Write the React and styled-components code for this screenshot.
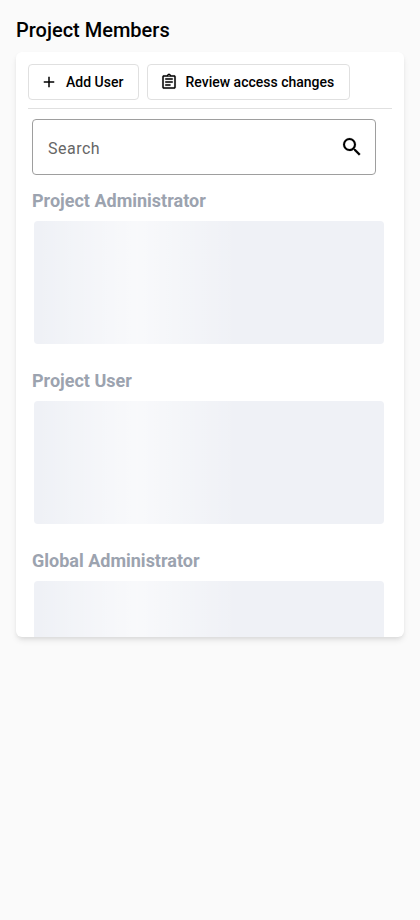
import React from "react";
import styled, { createGlobalStyle } from "styled-components";

const GlobalStyle = createGlobalStyle`
  *, *::before, *::after { box-sizing: border-box; }
  body { margin: 0; background: #fafafa; font-family: Roboto, sans-serif; color: #000; -webkit-font-smoothing: antialiased; }
`;

const Page = styled.main`
  min-height: 920px;
  padding: 14px 16px;
`;

const Title = styled.h1`
  margin: 0 0 6px;
  font-size: 20px;
  line-height: 32px;
  font-weight: 500;
`;

const Card = styled.section`
  display: flex;
  flex-direction: column;
  height: 585px;
  overflow: hidden;
  background: #fff;
  border-radius: 6px;
  box-shadow: 0 4px 6px -1px rgba(0,0,0,.1), 0 2px 4px -1px rgba(0,0,0,.06);
`;

const Toolbar = styled.div`
  display: flex;
  flex: none;
  gap: 8px;
  height: 57px;
  margin: 0 12px;
  padding-top: 12px;
  border-bottom: 1px solid #e0e0e0;
`;

const ToolButton = styled.button`
  display: flex;
  align-items: center;
  gap: 8px;
  width: ${({ $width }) => $width}px;
  height: 36px;
  padding: 0 0 0 ${({ $inset = 11 }) => $inset}px;
  border: 1px solid #e0e0e0;
  border-radius: 4px;
  background: #fff;
  color: #000;
  font: 500 14px/20px Roboto, sans-serif;
  white-space: nowrap;
`;

const Icon = styled.svg`
  flex: none;
  width: ${({ $size }) => $size}px;
  height: ${({ $size }) => $size}px;
  fill: currentColor;
  stroke: currentColor;
  stroke-width: ${({ $weight = 0 }) => $weight};
`;

const SearchField = styled.label`
  display: flex;
  flex: none;
  align-items: center;
  width: 344px;
  height: 56px;
  margin: 10px 16px 0;
  padding: 0 11px 0 15px;
  border: 1px solid #9e9e9e;
  border-radius: 4px;
`;

const SearchInput = styled.input`
  flex: 1;
  min-width: 0;
  padding: 3px 0 0;
  border: 0;
  outline: 0;
  background: none;
  font: 400 16px/24px Roboto, sans-serif;
  letter-spacing: .5px;
  &::placeholder { color: #666; opacity: 1; }
`;

const Group = styled.section`
  flex: none;
  height: 180px;
  padding: 0 20px 0 16px;
`;

const Groups = styled.div`
  padding-top: 12px;
`;

const GroupTitle = styled.h2`
  margin: 0;
  color: #9ca3af;
  font-size: 18px;
  line-height: 28px;
  font-weight: 700;
`;

const Skeleton = styled.div`
  height: 123px;
  margin: 6px 0 0 2px;
  border-radius: 4px;
  background: #eff1f6 linear-gradient(90deg, rgba(255,255,255,0), rgba(255,255,255,.6), rgba(255,255,255,0)) 3px 0 / 200px 100% no-repeat;
`;

const groups = ["Project Administrator", "Project User", "Global Administrator"];

export default function App() {
  return (
    <Page>
      <GlobalStyle />
      <Title>Project Members</Title>
      <Card>
        <Toolbar>
          <ToolButton $width={111}>
            <Icon $size={18} viewBox="0 0 24 24"><path d="M19 13h-6v6h-2v-6H5v-2h6V5h2v6h6v2z" /></Icon>
            Add User
          </ToolButton>
          <ToolButton $width={203} $inset={11.5}>
            <Icon $size={18} $weight={0.15} viewBox="0 0 24 24"><path d="M7 15h7v2H7zm0-4h10v2H7zm0-4h10v2H7zm12-4h-4.18C14.4 1.84 13.3 1 12 1c-1.3 0-2.4.84-2.82 2H5c-1.1 0-2 .9-2 2v14c0 1.1.9 2 2 2h14c1.1 0 2-.9 2-2V5c0-1.1-.9-2-2-2zm-7-.25c.41 0 .75.34.75.75s-.34.75-.75.75-.75-.34-.75-.75.34-.75.75-.75zM19 19H5V5h14v14z" /></Icon>
            Review access changes
          </ToolButton>
        </Toolbar>
        <SearchField>
          <SearchInput placeholder="Search" aria-label="Search" />
          <Icon $size={24} $weight={0.15} viewBox="0 0 24 24"><path d="M15.5 14h-.79l-.28-.27A6.471 6.471 0 0 0 16 9.5 6.5 6.5 0 1 0 9.5 16c1.61 0 3.09-.59 4.23-1.57l.27.28v.79l5 4.99L20.49 19l-4.99-5zm-6 0C7.01 14 5 11.99 5 9.5S7.01 5 9.5 5 14 7.01 14 9.5 11.99 14 9.5 14z" /></Icon>
        </SearchField>
        <Groups>
          {groups.map((name) => (
            <Group key={name}>
              <GroupTitle>{name}</GroupTitle>
              <Skeleton />
            </Group>
          ))}
        </Groups>
      </Card>
    </Page>
  );
}
